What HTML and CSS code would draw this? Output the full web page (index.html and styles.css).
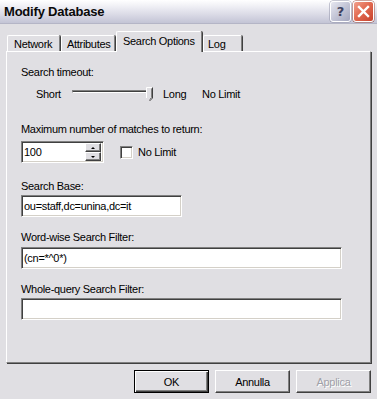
FILE: index.html
```html
<!DOCTYPE html>
<html lang="it">
<head>
  <meta charset="UTF-8">
  <title>Modify Database</title>
  <link rel="stylesheet" href="styles.css">
</head>
<body>
  <div class="window">
    <div class="titlebar">
      <span class="title">Modify Database</span>
      <div class="caption-buttons">
        <span class="cap-btn help">?</span>
        <span class="cap-btn close">
          <svg width="13" height="13" viewBox="0 0 13 13">
            <path d="M2 2 L11 11 M11 2 L2 11" stroke="#fff" stroke-width="2.4" stroke-linecap="square"/>
          </svg>
        </span>
      </div>
    </div>

    <div class="tabs">
      <span class="tab tab-network">Network</span>
      <span class="tab tab-attributes">Attributes</span>
      <span class="tab tab-search active">Search Options</span>
      <span class="tab tab-log">Log</span>
    </div>

    <div class="panel">
      <div class="label">Search timeout:</div>
      <div class="slider-row">
        <span class="slider-short">Short</span>
        <div class="slider">
          <div class="track"></div>
          <svg class="thumb" width="8" height="15" viewBox="0 0 8 15">
            <path d="M0.5 0.5 H6.5 V11 L3.5 14 L0.5 11 Z" fill="#e0dfe3"/>
            <path d="M0.5 11 V0.5 H6.5" fill="none" stroke="#fff"/>
            <path d="M6.5 0.5 V11 L3.5 14" fill="none" stroke="#404040"/>
            <path d="M5.5 1.5 V10.5 L3.5 12.5" fill="none" stroke="#808080"/>
          </svg>
        </div>
        <span class="slider-long">Long</span>
        <span>No Limit</span>
      </div>

      <div class="label label-max">Maximum number of matches to return:</div>
      <div class="spin-row">
        <div class="field field-spin">
          <span class="field-text">100</span>
          <div class="spin">
            <span class="spin-btn"><span class="arrow-up"></span></span>
            <span class="spin-btn"><span class="arrow-down"></span></span>
          </div>
        </div>
        <span class="checkbox"></span>
        <span class="check-label">No Limit</span>
      </div>

      <div class="label label-base">Search Base:</div>
      <div class="field field-base"><span class="field-text">ou=staff,dc=unina,dc=it</span></div>

      <div class="label label-word">Word-wise Search Filter:</div>
      <div class="field field-wide field-word"><span class="field-text">(cn=*^0*)</span></div>

      <div class="label label-whole">Whole-query Search Filter:</div>
      <div class="field field-wide field-whole"><span class="field-text"></span></div>
    </div>

    <div class="buttons">
      <span class="btn btn-default">OK</span>
      <span class="btn">Annulla</span>
      <span class="btn btn-disabled">Applica</span>
    </div>
  </div>
</body>
</html>
```

FILE: styles.css
```css
body {
    margin: 0;
    background: #e0dfe3;
    font-family: "Liberation Sans", Arial, sans-serif;
    font-size: 11px;
    letter-spacing: -0.3px;
    color: #000;
}

.window {
    width: 377px;
    height: 399px;
    overflow: hidden;
    display: flex;
    flex-direction: column;
}

/* barra del titolo */
.titlebar {
    height: 24px;
    box-sizing: border-box;
    display: flex;
    align-items: center;
    justify-content: space-between;
    padding: 0 3px 0 4px;
    background: linear-gradient(to bottom, #ffffff 0%, #f1f1f6 25%, #d9d9e5 65%, #c3c4d5 100%);
    border-bottom: 1px solid #b4b5c6;
}

.title {
    font-weight: bold;
    font-size: 13px;
    letter-spacing: -0.2px;
    color: #0a0a0a;
}

.caption-buttons {
    display: flex;
    gap: 2px;
}

.cap-btn {
    width: 21px;
    height: 21px;
    box-sizing: border-box;
    border-radius: 3px;
    display: flex;
    align-items: center;
    justify-content: center;
}

.help {
    border: 1px solid #fff;
    box-shadow: 0 0 0 0.5px #8f91a8;
    background: linear-gradient(135deg, #e6e7f0 0%, #c3c5d6 50%, #a3a6be 100%);
    color: #3d4160;
    font-family: "DejaVu Sans", sans-serif;
    font-weight: bold;
    font-size: 13px;
    letter-spacing: 0;
}

.close {
    border: 1px solid #fff;
    box-shadow: 0 0 0 0.5px #9a4a3c;
    background: linear-gradient(135deg, #f2a08c 0%, #e26b52 45%, #c8412c 100%);
}

/* schede */
.tabs {
    display: flex;
    align-items: flex-end;
    height: 19px;
    margin-top: 8px;
    padding-left: 7px;
}

.tab {
    height: 16px;
    box-sizing: border-box;
    border-top: 1px solid #fff;
    border-left: 1px solid #fff;
    border-right: 1px solid #808080;
    box-shadow: 1px 0 0 #404040;
    border-radius: 2px 2px 0 0;
    padding: 2px 0 0 6px;
    line-height: 13px;
    white-space: nowrap;
}

.tab-network { width: 53px; }
.tab-attributes { width: 54px; margin-left: 1px; padding-left: 5px; }
.tab-search { width: 86px; }
.tab-log { width: 39px; margin-left: 1px; padding-left: 4px; }

.tab.active {
    position: relative;
    z-index: 1;
    height: 21px;
    margin-bottom: -1px;
    margin-left: 1px;
    padding-top: 3px;
    background: #e0dfe3;
}

.panel {
    width: 365px;
    height: 312px;
    box-sizing: border-box;
    margin-left: 6px;
    border-top: 1px solid #fff;
    border-left: 1px solid #fff;
    border-right: 1px solid #808080;
    border-bottom: 1px solid #808080;
    box-shadow: 1px 1px 0 #404040;
    padding: 14px 0 0 14px;
}

.label {
    line-height: 13px;
    height: 13px;
}

.slider-row {
    display: flex;
    align-items: center;
    height: 15px;
    margin-top: 8px;
    line-height: 13px;
}

.slider-short {
    width: 36px;
    margin-left: 15px;
}

.slider {
    position: relative;
    width: 91px;
    height: 15px;
}

.track {
    margin-top: 3px;
    width: 79px;
    height: 3px;
    box-sizing: border-box;
    border-top: 1px solid #808080;
    border-left: 1px solid #808080;
    border-bottom: 1px solid #fff;
    border-right: 1px solid #fff;
    background: #404040;
}

.thumb {
    position: absolute;
    left: 74px;
    top: 0;
}

.slider-long {
    width: 39px;
}

.label-max { margin-top: 21px; }

.field {
    height: 22px;
    box-sizing: border-box;
    background: #fff;
    border-top: 1px solid #808080;
    border-left: 1px solid #808080;
    border-bottom: 1px solid #fff;
    border-right: 1px solid #fff;
    box-shadow: inset 1px 1px 0 #404040, inset -1px -1px 0 #d4d0c8;
    display: flex;
    align-items: center;
}

.field-text {
    flex: 1;
    padding-left: 2px;
    line-height: 13px;
    white-space: nowrap;
}

.spin-row {
    display: flex;
    align-items: center;
    margin-top: 5px;
}

.field-spin {
    width: 83px;
    padding-right: 2px;
}

.spin {
    display: flex;
    flex-direction: column;
    width: 16px;
}

.spin-btn {
    height: 9px;
    box-sizing: border-box;
    background: #e0dfe3;
    border-top: 1px solid #fff;
    border-left: 1px solid #fff;
    border-right: 1px solid #404040;
    border-bottom: 1px solid #404040;
    box-shadow: inset -1px -1px 0 #808080;
    display: flex;
    align-items: center;
    justify-content: center;
}

.arrow-up,
.arrow-down {
    width: 0;
    height: 0;
    border-left: 2px solid transparent;
    border-right: 2px solid transparent;
}

.arrow-up { border-bottom: 2px solid #000; }
.arrow-down { border-top: 2px solid #000; }

.checkbox {
    width: 13px;
    height: 13px;
    box-sizing: border-box;
    margin-left: 16px;
    background: #fff;
    border-top: 1px solid #808080;
    border-left: 1px solid #808080;
    border-bottom: 1px solid #fff;
    border-right: 1px solid #fff;
    box-shadow: inset 1px 1px 0 #404040, inset -1px -1px 0 #d4d0c8;
}

.check-label {
    margin-left: 5px;
    line-height: 13px;
}

.label-base { margin-top: 17px; }
.field-base { width: 161px; margin-top: 2px; }

.label-word { margin-top: 14px; }
.field-wide { width: 321px; }
.field-word { margin-top: 3px; }

.label-whole { margin-top: 14px; }
.field-whole { margin-top: 2px; }

/* pulsanti in basso */
.buttons {
    display: flex;
    justify-content: flex-end;
    gap: 6px;
    margin-top: 7px;
    padding-right: 6px;
}

.btn {
    width: 75px;
    height: 23px;
    box-sizing: border-box;
    display: flex;
    align-items: center;
    justify-content: center;
    background: #e0dfe3;
    border-top: 1px solid #fff;
    border-left: 1px solid #fff;
    border-right: 1px solid #404040;
    border-bottom: 1px solid #404040;
    box-shadow: inset -1px -1px 0 #808080;
}

.btn-default {
    border: 1px solid #000;
    box-shadow: inset 1px 1px 0 #fff, inset -1px -1px 0 #404040, inset -2px -2px 0 #808080;
}

.btn-disabled {
    color: #a0a0a8;
    text-shadow: 1px 1px 0 #fff;
}
```
